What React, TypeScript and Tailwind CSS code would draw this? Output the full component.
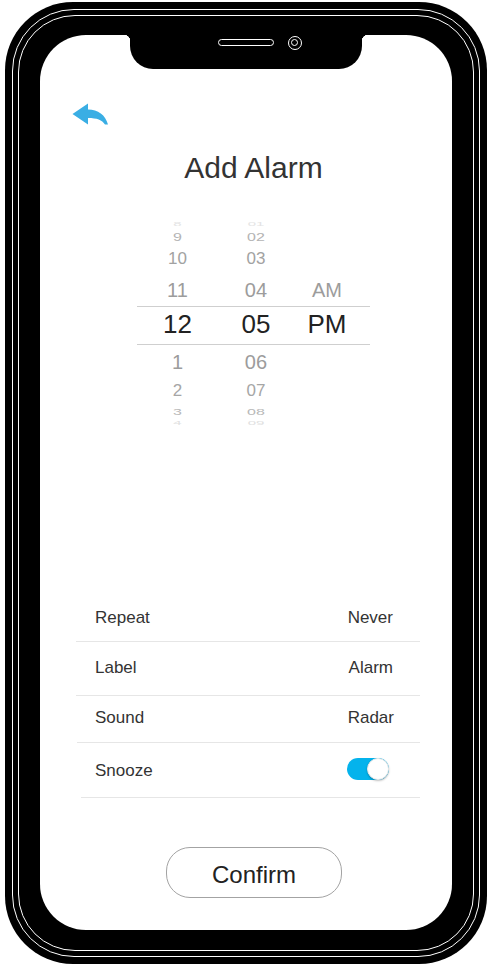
import React from "react";

type PickRow = {
  h: string;
  t: string;
  v: [string, string, string];
};

// rows of the wheel, top to bottom (the selected one is drawn apart)
const above: PickRow[] = [
  { h: "h-[10px]", t: "text-[15px] text-[#e4e4e4] scale-y-[0.3]", v: ["8", "01", ""] },
  { h: "h-[14px]", t: "text-[16px] text-[#b4b4b4] scale-y-[0.72]", v: ["9", "02", ""] },
  { h: "h-[30px]", t: "text-[17px] text-[#a2a2a2]", v: ["10", "03", ""] },
  { h: "h-[32px]", t: "text-[20px] text-[#9c9c9c]", v: ["11", "04", "AM"] },
];

const below: PickRow[] = [
  { h: "h-[34px]", t: "text-[20px] text-[#9c9c9c]", v: ["1", "06", ""] },
  { h: "h-[24px]", t: "text-[17px] text-[#a6a6a6]", v: ["2", "07", ""] },
  { h: "h-[18px]", t: "text-[16px] text-[#b8b8b8] scale-y-[0.6]", v: ["3", "08", ""] },
  { h: "h-[6px]", t: "text-[15px] text-[#e0e0e0] scale-y-[0.3]", v: ["4", "09", ""] },
];

function WheelRow({ row }: { row: PickRow }) {
  return (
    <div className={`flex items-center overflow-hidden ${row.h}`}>
      <div className={`w-[81px] text-center leading-none ${row.t}`}>{row.v[0]}</div>
      <div className={`w-[76px] text-center leading-none ${row.t}`}>{row.v[1]}</div>
      <div className={`w-[66px] text-center leading-none ${row.t}`}>{row.v[2]}</div>
    </div>
  );
}

function BackArrow() {
  return (
    <svg width="36" height="22" viewBox="0 0 36 22">
      <path
        d="M0.5 11 L16 0.5 L16 6.5 C26 6.5 33.5 12 36 21.5 L33 21.5 C30 17 25 15 16 15 L16 21.5 Z"
        fill="#3aaee4"
      />
    </svg>
  );
}

function SettingRow({
  label,
  value,
  box,
}: {
  label: string;
  value: React.ReactNode;
  box: string;
}) {
  return (
    <div className={`flex items-center justify-between ${box}`}>
      <span className="pt-[3px]">{label}</span>
      {value}
    </div>
  );
}

export default function App() {
  return (
    <div className="w-[492px] h-[966px] bg-white pt-[2px] pl-[5px] font-['Liberation_Sans',Arial,sans-serif]">
      {/* phone body */}
      <div className="w-[482px] h-[962px] bg-black rounded-[68px] p-[7px]">
        <div className="h-full border border-white rounded-[62px] p-[4.7px]">
          <div className="h-full border border-white rounded-[57px] px-[21.3px] pt-[19px] pb-[20px]">
            {/* screen */}
            <div className="relative h-full bg-white rounded-[46px] flex flex-col text-[#333]">
              {/* notch */}
              <div className="absolute left-[90px] top-0 w-[232px] h-[34px] bg-black rounded-b-[23px]">
                <div className="absolute -left-[6px] top-0 w-[6px] h-[6px] bg-[radial-gradient(circle_at_0_100%,transparent_6px,#000_6.5px)]" />
                <div className="absolute -right-[6px] top-0 w-[6px] h-[6px] bg-[radial-gradient(circle_at_100%_100%,transparent_6px,#000_6.5px)]" />
                <div className="absolute left-[88px] top-[4px] w-[56px] h-[7.5px] rounded-full border border-white" />
                <div className="absolute left-[158px] top-[1px] w-[14px] h-[14px] rounded-full border border-white flex items-center justify-center">
                  <div className="w-[7px] h-[7px] rounded-full border border-white" />
                </div>
              </div>

              <div className="mt-[68px] ml-[32px] h-[22px]">
                <BackArrow />
              </div>

              <h1 className="mt-[25px] pl-[15px] h-[36px] leading-[36px] text-center text-[30px] text-[#333]">
                Add Alarm
              </h1>

              {/* time wheel */}
              <div className="mt-[34px] ml-[97px] w-[233px]">
                {above.map((r, i) => (
                  <WheelRow key={i} row={r} />
                ))}
                <div className="flex items-center h-[39px] pb-[3px] border-y border-[#cfcfcf] text-[26px] text-[#222] leading-none">
                  <div className="w-[81px] text-center">12</div>
                  <div className="w-[76px] text-center">05</div>
                  <div className="w-[66px] text-center">PM</div>
                </div>
                {below.map((r, i) => (
                  <WheelRow key={i} row={r} />
                ))}
              </div>

              {/* settings */}
              <div className="mt-[165px] ml-[36px] w-[344px] text-[17px]">
                <SettingRow
                  label="Repeat"
                  value={<span className="pt-[3px] pr-[27px]">Never</span>}
                  box="h-[50px] pl-[19px] border-b border-[#e6e6e6]"
                />
                <SettingRow
                  label="Label"
                  value={<span className="pt-[3px] pr-[27px]">Alarm</span>}
                  box="h-[54px] pb-[4px] pl-[19px] border-b border-[#e6e6e6]"
                />
                <div className="ml-[1px]">
                  <SettingRow
                    label="Sound"
                    value={<span className="pt-[3px] pr-[26px]">Radar</span>}
                    box="h-[47px] pb-[5px] pl-[18px] border-b border-[#e6e6e6]"
                  />
                </div>
                <div className="ml-[5px]">
                  <SettingRow
                    label="Snooze"
                    value={
                      <div className="mr-[31px] relative w-[42px] h-[22px] rounded-full bg-[#04b3ec]">
                        <div className="absolute right-0 top-0 w-[22px] h-[22px] rounded-full bg-white shadow-[0_1px_2px_rgba(0,0,0,0.25)] border border-[#e8e8e8]" />
                      </div>
                    }
                    box="h-[55px] pb-[1px] pl-[14px] border-b border-[#e6e6e6]"
                  />
                </div>
              </div>

              <button className="mt-[49px] ml-[126px] w-[176px] h-[51px] pt-[6px] rounded-[24px] border border-[#a3a3a3] text-[24px] text-[#222] bg-white">
                Confirm
              </button>
            </div>
          </div>
        </div>
      </div>
    </div>
  );
}
